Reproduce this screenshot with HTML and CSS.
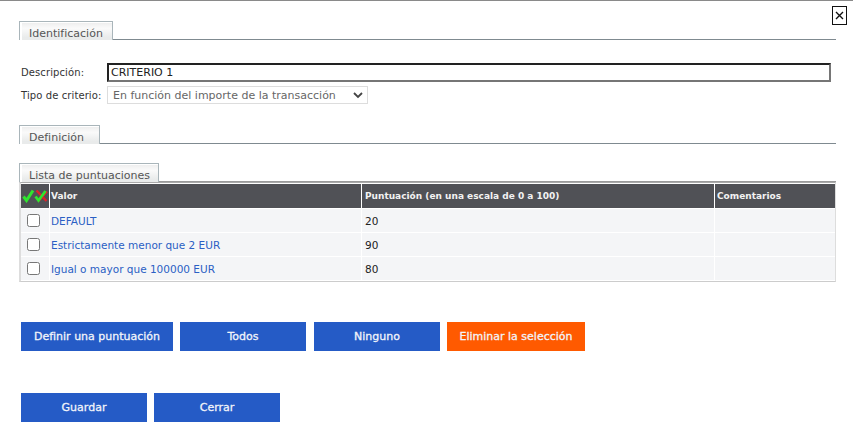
FILE: index.html
```html
<!DOCTYPE html>
<html lang="es">
<head>
<meta charset="utf-8">
<title>Criterio</title>
<link rel="stylesheet" href="styles.css">
</head>
<body>
<main class="dialog">
  <div class="close-row"><button class="close" aria-label="Cerrar"><svg width="9" height="9" viewBox="0 0 9 9"><path d="M1 1l7 7M8 1l-7 7" stroke="#111" stroke-width="1.4" fill="none"/></svg></button></div>
  <div class="tabbar tabbar-first"><span class="tab tab-id">Identificación</span></div>
  <div class="form">
    <div class="form-row row-desc"><label class="lbl">Descripción:</label><div class="text-input">CRITERIO 1</div></div>
    <div class="form-row row-type"><label class="lbl">Tipo de criterio:</label>
      <div class="select"><span>En función del importe de la transacción</span><svg width="10" height="7" viewBox="0 0 10 7"><path d="M1 1l4 4 4-4" stroke="#444" stroke-width="1.8" fill="none"/></svg></div>
    </div>
  </div>
  <div class="tabbar tabbar-def"><span class="tab tab-def">Definición</span></div>
  <div class="tabbar tabbar-list"><span class="tab">Lista de puntuaciones</span></div>
  <div class="table">
    <div class="grid head">
      <div class="cell icons"><svg width="26" height="14" viewBox="0 0 26 14"><path d="M1.500 7.500l3 4 6.500-10" stroke="#2ee62e" stroke-width="3" fill="none"/><path d="M14.500 1.500l10 10.500M25 2.500l-9 10" stroke="#e0202a" stroke-width="2.400" fill="none"/><path d="M13.500 7.500l3 4 7-9.500" stroke="#2ee62e" stroke-width="2.800" fill="none"/></svg></div>
      <div class="cell col-value">Valor</div>
      <div class="cell col-score">Puntuación (en una escala de 0 a 100)</div>
      <div class="cell">Comentarios</div>
    </div>
    <div class="grid row">
      <div class="cell check"><span class="box"></span></div>
      <div class="cell col-value link">DEFAULT</div>
      <div class="cell col-score">20</div>
      <div class="cell"></div>
    </div>
    <div class="grid row">
      <div class="cell check"><span class="box"></span></div>
      <div class="cell col-value link">Estrictamente menor que 2 EUR</div>
      <div class="cell col-score">90</div>
      <div class="cell"></div>
    </div>
    <div class="grid row">
      <div class="cell check"><span class="box"></span></div>
      <div class="cell col-value link">Igual o mayor que 100000 EUR</div>
      <div class="cell col-score">80</div>
      <div class="cell"></div>
    </div>
  </div>
  <div class="actions actions-top">
    <button class="btn btn-wide">Definir una puntuación</button>
    <button class="btn">Todos</button>
    <button class="btn btn-gap">Ninguno</button>
    <button class="btn btn-danger">Eliminar la selección</button>
  </div>
  <div class="actions actions-bottom">
    <button class="btn">Guardar</button>
    <button class="btn">Cerrar</button>
  </div>
</main>
</body>
</html>
```
FILE: styles.css
```css
* { box-sizing: border-box; }
html, body { margin: 0; padding: 0; background: #fff; }
body { width: 853px; height: 439px; overflow: hidden; font-family: "DejaVu Sans", Verdana, sans-serif; font-size: 10.5px; color: #222; }
.dialog { border-top: 1px solid #8a8a8a; padding: 0 17px 0 19px; height: 439px; }
.close-row { height: 20px; display: flex; justify-content: flex-end; margin-right: -11px; padding-top: 5px; overflow: visible; }
.close { width: 15px; height: 19px; border: 1px solid #111; background: #fff; padding: 0; display: flex; align-items: center; justify-content: center; }
.tabbar { display: flex; border-bottom: 1px solid #7f8a90; }
.tabbar-first { height: 19px; }
.tabbar-def { height: 19px; margin-top: 21px; }
.tabbar-list { height: 19px; margin-top: 19px; border-bottom-color: #9a9a9a; }
.tab { display: block; height: 19px; padding: 5px 8px 0 9px; border: 1px solid #a9b5ba; border-bottom: 0; background: linear-gradient(#ececec, #fafafa 35%, #e9ebeb 85%); color: #555; font-size: 11px; line-height: 14px; box-shadow: inset 2px 1px 0 #fff; }
.tab-id { padding-right: 9px; }
.tab-def { padding-right: 15px; }
.form { padding: 0 0 0 2px; }
.form-row { display: flex; align-items: center; }
.row-desc { margin-top: 22px; height: 20px; }
.row-type { margin-top: 4px; height: 18px; }
.lbl { width: 86px; font-size: 10px; letter-spacing: 0.1px; color: #333; }
.text-input { width: 724px; height: 19px; border: 2px solid; border-color: #222 #767676 #767676 #222; font-size: 11px; line-height: 15px; padding-left: 2px; color: #222; }
.select { width: 261px; height: 18px; border: 1px solid #ddd; display: flex; align-items: center; justify-content: space-between; padding: 0 4px 0 5px; font-size: 11px; color: #666; }
.table { border-top: 1px solid #aaa; border-bottom: 1px solid #ccc; border-left: 2px solid #ddd; border-right: 1px solid #ddd; padding-top: 1px; height: 100px; }
.grid { display: grid; grid-template-columns: 28px 311px 352px 120px; column-gap: 1px; height: 24px; }
.head { background: #fff; color: #f2f2f2; font-size: 9px; font-weight: bold; height: 25px; padding-bottom: 1px; }
.head .cell { background: #505156; }
.row { height: 24px; padding-bottom: 1px; font-size: 10.5px; }
.row .cell { background: #f4f5f7; }
.cell { display: flex; align-items: center; padding-left: 2px; white-space: nowrap; overflow: hidden; }
.icons { padding-left: 1px; }
.col-value { padding-left: 1px; }
.col-score { padding-left: 3px; }
.check { padding-left: 6px; }
.box { width: 13px; height: 13px; border: 1px solid #777; border-radius: 2.5px; background: #fff; }
.link { color: #2a5fc4; }
.actions { display: flex; gap: 7px; padding-left: 2px; }
.actions-top { margin-top: 40px; }
.actions-bottom { margin-top: 42px; }
.btn { width: 126px; height: 29px; border: 0; background: #255bc6; color: #f2f4fa; font-family: inherit; font-size: 11px; font-weight: normal; padding: 0; -webkit-text-stroke: 0.3px #f2f4fa; }
.btn-wide { width: 152px; }
.btn-gap { margin-left: 1px; }
.btn-danger { width: 138px; background: #ff5a00; }
```
